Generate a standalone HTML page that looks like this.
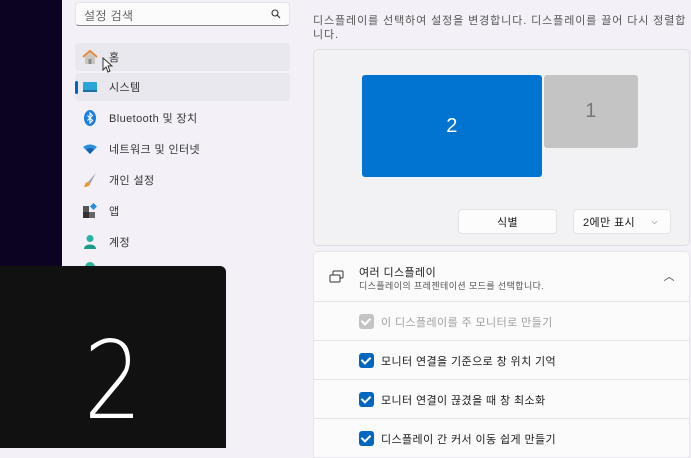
<!DOCTYPE html>
<html><head><meta charset="utf-8"><style>
*{margin:0;padding:0;box-sizing:border-box}
body{width:691px;height:448px;overflow:hidden;background:#f3f1f7;font-family:"Liberation Sans","Noto Sans CJK KR",sans-serif;position:relative;color:#1b1b1b;letter-spacing:.4px}
.abs{position:absolute}
.dark{left:0;top:0;width:62px;height:448px;background:#0c0322}
.search{left:75px;top:2px;width:215px;height:24px;background:#fbfbfc;border:1px solid #e3e3e6;border-bottom:1px solid #8a8a8a;border-radius:4px;font-size:12px;color:#666;padding:4px 8px}
.nav{left:75px;width:215px;height:28px;border-radius:4px;font-size:11px;display:flex;align-items:center;padding-left:34px;color:#333}
.ico{position:absolute;left:7px;top:6px;width:16px;height:16px}
.panel{left:313px;top:49px;width:377px;height:197px;background:#f2f2f4;border:1px solid #dedee2;border-radius:5px}
.btn{height:25px;background:#fcfcfd;border:1px solid #e3e3e6;border-radius:4px;font-size:11px;display:flex;align-items:center}
.card{left:313px;width:377px;background:#fbfbfc;border:1px solid #e6e6ea}
.cb{position:absolute;left:45px;top:12px;width:15px;height:15px;border-radius:3px;background:#0067c0}
.cb:after{content:"";position:absolute;left:4px;top:2px;width:4px;height:7px;border:solid #fff;border-width:0 2px 2px 0;transform:rotate(45deg)}
.row{font-size:11px}
.row span{position:absolute;left:67px;top:12px}
</style></head><body>
<div class="abs dark"></div>
<div class="abs search">설정 검색<svg class="abs" style="right:8px;top:6px" width="10" height="10" viewBox="0 0 10 10"><circle cx="4" cy="4" r="3" fill="none" stroke="#333" stroke-width="1.1"/><path d="M6.3 6.3L9 9" stroke="#333" stroke-width="1.1"/></svg></div>

<div class="abs nav" style="top:43px;background:#eae8ef">
<svg class="ico" viewBox="0 0 16 16"><path d="M1 8L8 2l7 6" fill="none" stroke="#e48a3c" stroke-width="2"/><path d="M3 8v7h10V8L8 4z" fill="#c9c5c0"/><rect x="6.5" y="10" width="3" height="5" fill="#8a8a8a"/></svg>홈</div>
<svg class="abs" style="left:102px;top:57px" width="11" height="16" viewBox="0 0 11 16"><path d="M1 1v12l3-3 2 5 2-1-2-5h4z" fill="#fff" stroke="#333" stroke-width="1"/></svg>
<div class="abs nav" style="top:73px;background:#eae8ef">
<div class="abs" style="left:0;top:8px;width:3px;height:13px;background:#0067c0;border-radius:2px"></div>
<svg class="ico" viewBox="0 0 16 16"><rect x="1" y="3" width="14" height="9" rx="1" fill="#2aa5d6"/><rect x="1" y="11" width="14" height="2" fill="#1a6fa0"/></svg>시스템</div>
<div class="abs nav" style="top:104px"><svg class="ico" viewBox="0 0 16 16"><ellipse cx="8" cy="8" rx="6" ry="8" fill="#1a7fe0"/><path d="M5.5 5.5l5 5L8 13V3l2.5 2.5-5 5" fill="none" stroke="#fff" stroke-width="1.1"/></svg>Bluetooth 및 장치</div>
<div class="abs nav" style="top:135px"><svg class="ico" viewBox="0 0 16 16"><path d="M1 6q7-5 14 0L8 13z" fill="#2a8fe0"/><path d="M4 8.5q4-3 8 0L8 13z" fill="#1a5fb0"/></svg>네트워크 및 인터넷</div>
<div class="abs nav" style="top:166px"><svg class="ico" viewBox="0 0 16 16"><path d="M14 1L6 10l2 2z" fill="#a0a0a8"/><path d="M6 10c-3 0-3 3-4 5 3 0 6-1 6-3z" fill="#e89a3a"/></svg>개인 설정</div>
<div class="abs nav" style="top:197px"><svg class="ico" viewBox="0 0 16 16"><rect x="1" y="3" width="6" height="6" fill="#555"/><rect x="1" y="9" width="6" height="6" fill="#333"/><rect x="7" y="9" width="6" height="6" fill="#666"/><rect x="9" y="1" width="5" height="5" fill="#2a8fe0" transform="rotate(45 11.5 3.5)"/></svg>앱</div>
<div class="abs nav" style="top:228px"><svg class="ico" viewBox="0 0 16 16"><circle cx="8" cy="4.5" r="3.5" fill="#2bb3a0"/><path d="M2 15c0-6 12-6 12 0z" fill="#1c9a88"/></svg>계정</div>
<div class="abs" style="left:85px;top:262px;width:10px;height:6px;border-radius:5px 5px 0 0;background:#2bb3a0"></div>

<div class="abs" style="left:0;top:266px;width:226px;height:182px;background:#111;border-radius:0 6px 0 0"></div>
<div class="abs" style="left:0;top:322px;width:226px;text-align:center;color:#fff;font-size:108px;font-weight:300;line-height:120px;font-family:'DejaVu Sans','Liberation Sans',sans-serif;transform:scaleX(.85);letter-spacing:0">2</div>

<div class="abs" style="left:313px;top:14px;width:376px;font-size:11px;color:#555;line-height:14px;letter-spacing:.9px">디스플레이를 선택하여 설정을 변경합니다. 디스플레이를 끌어 다시 정렬합니다.</div>
<div class="abs panel"></div>
<div class="abs" style="left:362px;top:75px;width:180px;height:102px;background:#0173d0;border-radius:3px;color:#fff;font-size:20px;display:flex;align-items:center;justify-content:center">2</div>
<div class="abs" style="left:544px;top:75px;width:94px;height:73px;background:#c4c4c4;border-radius:3px;color:#777;font-size:20px;display:flex;align-items:center;justify-content:center">1</div>
<div class="abs btn" style="left:458px;top:209px;width:99px;justify-content:center">식별</div>
<div class="abs btn" style="left:573px;top:209px;width:98px;padding-left:9px">2에만 표시<span style="position:absolute;right:12px;font-size:8px;color:#666">⌵</span></div>

<div class="abs card" style="top:251px;height:51px;border-radius:5px 5px 0 0">
<svg class="abs" style="left:15px;top:18px" width="16" height="14" viewBox="0 0 16 14"><rect x="4" y="1" width="10" height="7" rx="1" fill="none" stroke="#333"/><rect x="1" y="5" width="10" height="7" rx="1" fill="#fbfbfc" stroke="#333"/></svg>
<div class="abs" style="left:45px;top:12px;font-size:11px">여러 디스플레이</div>
<div class="abs" style="left:45px;top:27px;font-size:9px;color:#555">디스플레이의 프레젠테이션 모드를 선택합니다.</div>
<div class="abs" style="right:14px;top:16px;font-size:11px;color:#444">︿</div>
</div>
<div class="abs card row" style="top:302px;height:39px;border-top:none"><div class="cb" style="background:#c3c3c3"></div><span style="color:#a0a0a0">이 디스플레이를 주 모니터로 만들기</span></div>
<div class="abs card row" style="top:341px;height:39px;border-top:none"><div class="cb"></div><span>모니터 연결을 기준으로 창 위치 기억</span></div>
<div class="abs card row" style="top:380px;height:39px;border-top:none"><div class="cb"></div><span>모니터 연결이 끊겼을 때 창 최소화</span></div>
<div class="abs card row" style="top:419px;height:39px;border-top:none"><div class="cb"></div><span>디스플레이 간 커서 이동 쉽게 만들기</span></div>
</body></html>
